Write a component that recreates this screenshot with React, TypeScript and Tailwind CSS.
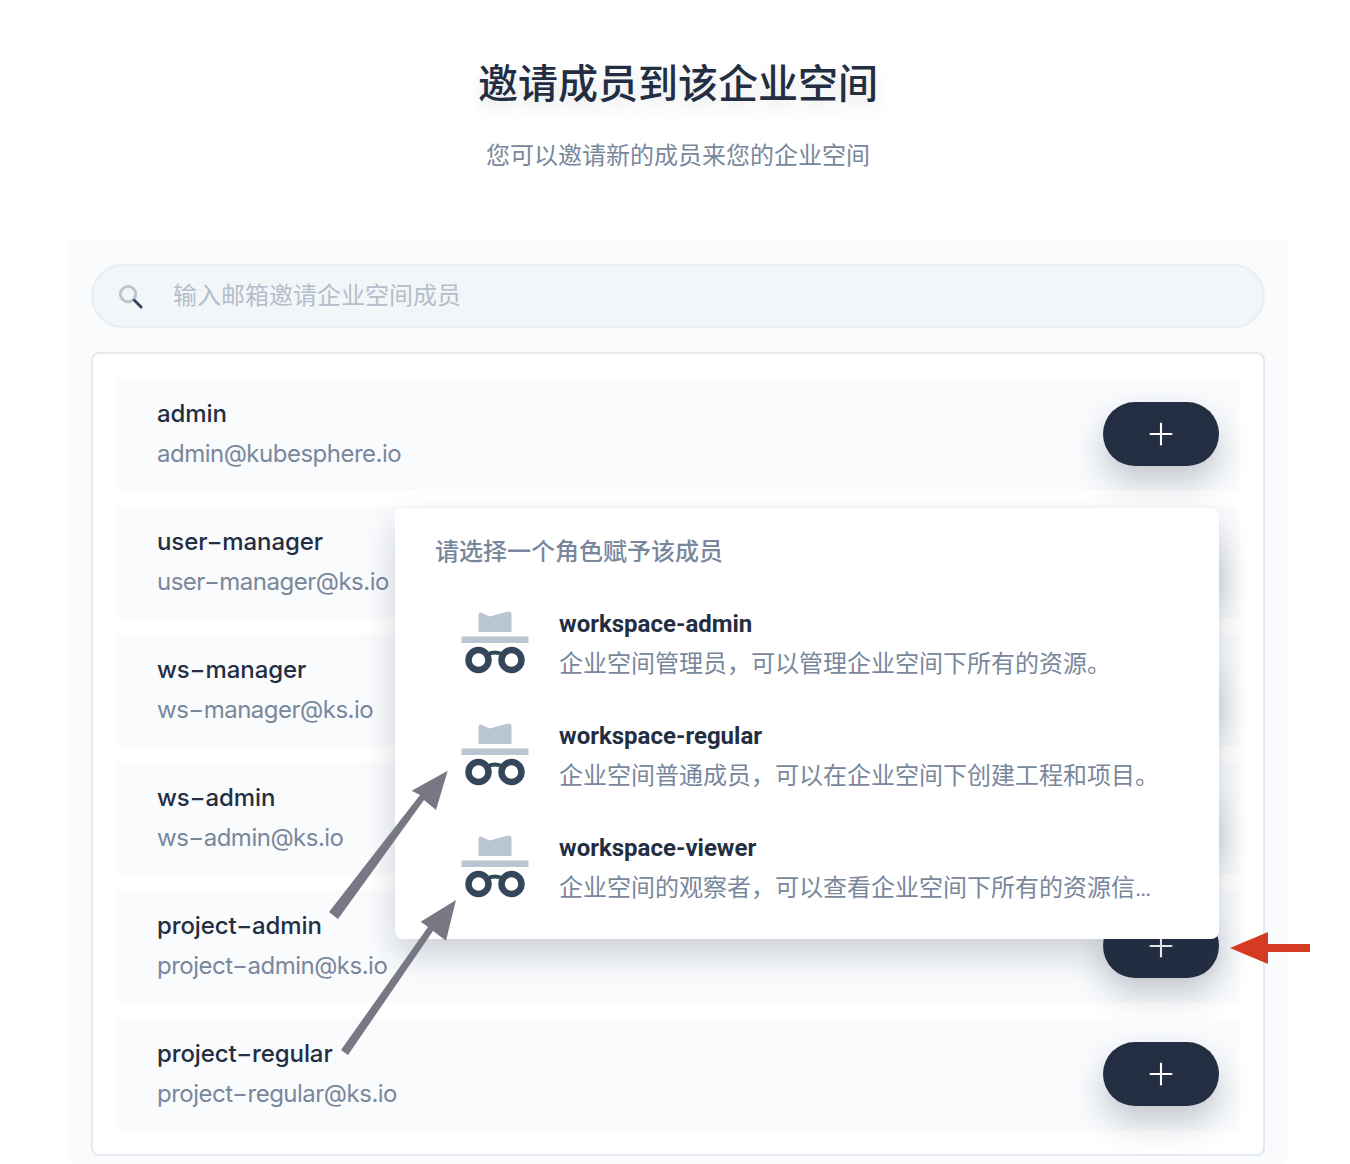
import { Plus } from "lucide-react";

const users = [
  { name: "admin", email: "admin@kubesphere.io" },
  { name: "user−manager", email: "user−manager@ks.io" },
  { name: "ws−manager", email: "ws−manager@ks.io" },
  { name: "ws−admin", email: "ws−admin@ks.io" },
  { name: "project−admin", email: "project−admin@ks.io" },
  { name: "project−regular", email: "project−regular@ks.io" },
];

const roles = [
  { name: "workspace-admin", desc: "企业空间管理员\uFF0C可以管理企业空间下所有的资源。" },
  { name: "workspace-regular", desc: "企业空间普通成员\uFF0C可以在企业空间下创建工程和项目。" },
  { name: "workspace-viewer", desc: "企业空间的观察者\uFF0C可以查看企业空间下所有的资源信息。" },
];

function RoleIcon() {
  return (
    <svg width="68" height="64" viewBox="0 0 68 64" className="shrink-0">
      <path d="M17.5 21V3.5Q17.5 1 20 1.5L28.5 5.5 47.5 .5Q50 0 50.5 3V21Z" fill="#b9c5d2" />
      <rect x="0.5" y="25.5" width="67" height="6.5" fill="#b9c5d2" />
      <circle cx="17.5" cy="49" r="10" fill="none" stroke="#36465a" strokeWidth="6.5" />
      <circle cx="50.5" cy="49" r="10" fill="none" stroke="#36465a" strokeWidth="6.5" />
      <path d="M25.5 44Q34 39 42.5 44" fill="none" stroke="#36465a" strokeWidth="4" />
    </svg>
  );
}

function SearchIcon() {
  return (
    <svg width="25" height="25" viewBox="0 0 26 26" className="shrink-0">
      <circle cx="10.5" cy="10.5" r="8" fill="none" stroke="#b9c5d2" strokeWidth="3" />
      <path d="M17 17L24 24" stroke="#36435c" strokeWidth="3" strokeLinecap="round" />
    </svg>
  );
}

export default function App() {
  return (
    <div className="relative h-[1164px] overflow-hidden bg-white font-['Inter','Noto_Sans_CJK_SC',sans-serif]">
      <div className="pl-[6px] pt-[54px] text-center">
        <h1 className="text-[40px] font-medium leading-[60px] text-[#242e42] [text-shadow:0_8px_16px_rgba(36,46,66,0.12)]">
          邀请成员到该企业空间
        </h1>
        <p className="mt-[26px] text-2xl leading-[32px] text-[#79879c]">您可以邀请新的成员来您的企业空间</p>
      </div>

      <div className="ml-[67px] mt-[68px] h-[924px] w-[1222px] rounded-lg bg-[#f9fbfd] px-6 pt-6">
        <div className="flex h-[64px] items-center rounded-[32px] border-2 border-[#e9eef3] bg-[#f3f6f9] pl-[25px]">
          <SearchIcon />
          <span className="ml-[30px] text-2xl text-[#b4becb]">输入邮箱邀请企业空间成员</span>
        </div>

        <div className="relative mt-6 flex flex-col gap-4 rounded-lg border-2 border-[#e3e9ef] bg-white p-6">
          {users.map((u) => (
            <div key={u.name} className="flex h-[112px] items-center justify-between rounded bg-[#f9fbfd] pl-10 pr-5">
              <div>
                <div className="text-2xl font-medium leading-8 tracking-[-0.1px] text-[#242e42]">{u.name}</div>
                <div className="mt-2 text-2xl leading-8 tracking-[-0.5px] text-[#79879c]">{u.email}</div>
              </div>
              <button className="flex h-16 w-[116px] items-center justify-center rounded-[32px] bg-[#242e42] text-white shadow-[0_16px_32px_rgba(36,46,66,0.25)]">
                <Plus size={36} strokeWidth={1.4} />
              </button>
            </div>
          ))}

          <div className="absolute left-[302px] top-[154px] h-[431px] w-[824px] rounded-lg bg-white pl-10 pt-7 shadow-[0_16px_32px_rgba(36,46,66,0.2)]">
            <div className="text-2xl font-medium leading-8 text-[#79879c]">请选择一个角色赋予该成员</div>
            <div className="mt-[40px] flex flex-col">
              {roles.map((r) => (
                <div key={r.name} className="flex h-[112px] items-start pl-[26px]">
                  <div className="pt-[3px]">
                    <RoleIcon />
                  </div>
                  <div className="ml-[30px] w-[600px] min-w-0 font-['Roboto','Noto_Sans_CJK_SC',sans-serif]">
                    <div className="text-2xl font-bold leading-8 text-[#242e42]">{r.name}</div>
                    <div className="mt-2 truncate text-2xl leading-8 text-[#79879c]">{r.desc}</div>
                  </div>
                </div>
              ))}
            </div>
          </div>
        </div>
      </div>

      <svg width="1350" height="1164" className="pointer-events-none absolute left-0 top-0">
        <path d="M329 912L338 919 424 800 436 810 447.7 770.7 411.7 790.7 420 795Z" fill="#787884" />
        <path d="M341 1050L348 1055 433 931 446 940.7 456 900 420.7 921.7 428 927Z" fill="#787884" />
        <path d="M1230 948L1268 932V944H1310V952H1268V964Z" fill="#d53a22" />
      </svg>
    </div>
  );
}
